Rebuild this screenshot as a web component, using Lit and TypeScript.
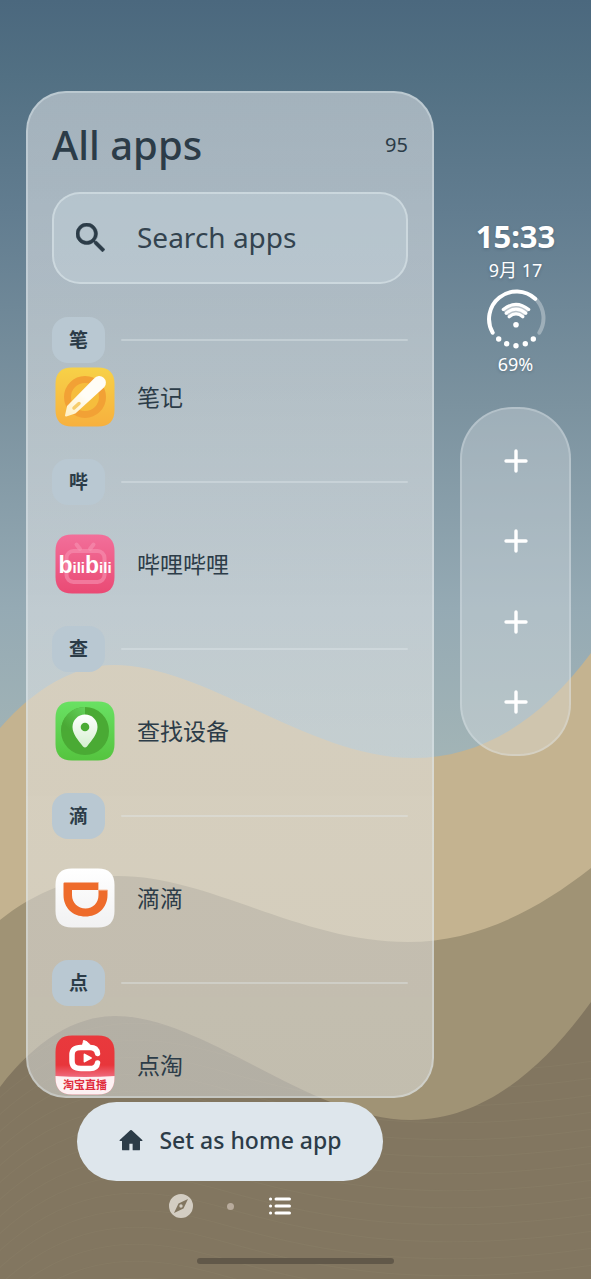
import { LitElement, html, svg, css } from "lit";
import { customElement, property } from "lit/decorators.js";

type AppIcon = "notes" | "bilibili" | "find" | "didi" | "diantao";

interface AppEntry {
  letter: string;
  name: string;
  icon: AppIcon;
}

const APPS: AppEntry[] = [
  { letter: "笔", name: "笔记", icon: "notes" },
  { letter: "哔", name: "哔哩哔哩", icon: "bilibili" },
  { letter: "查", name: "查找设备", icon: "find" },
  { letter: "滴", name: "滴滴", icon: "didi" },
  { letter: "点", name: "点淘", icon: "diantao" },
];

/* Rounded tile shared by every launcher icon, on a 60 x 60 grid. */
const TILE =
  "M17 .5H43C54 .5 59.500 6 59.500 17V43C59.500 54 54 59.500 43 59.500H17C6 59.500 .5 54 .5 43V17C.5 6 6 .5 17 .5Z";

@customElement("dune-wallpaper")
class DuneWallpaper extends LitElement {
  static styles = css`
    :host {
      display: block;
      min-height: 0;
    }
    .scene {
      display: block;
      width: 100%;
      height: 100%;
    }
  `;

  render() {
    const ripples = Array.from({ length: 22 }, (_, i) => i * 17 - 60);
    return html`
      <svg class="scene" viewBox="0 0 591 1279" preserveAspectRatio="none" aria-hidden="true">
        <defs>
          <linearGradient id="sky" x1="0" y1="0" x2="0" y2="760" gradientUnits="userSpaceOnUse">
            <stop offset="0" stop-color="#4b687e" />
            <stop offset="0.1" stop-color="#527083" />
            <stop offset="0.28" stop-color="#627d90" />
            <stop offset="0.53" stop-color="#7b929f" />
            <stop offset="0.8" stop-color="#95aab4" />
            <stop offset="1" stop-color="#a2b4b6" />
          </linearGradient>
          <clipPath id="front">
            <path d="M0 1087C35 1041 75 1016 115 1016C205 1016 310 1120 411 1120C485 1120 545 1066 591 1002V1279H0Z" />
          </clipPath>
        </defs>
        <rect width="591" height="1279" fill="url(#sky)" />
        <path fill="#c4b390" d="M0 728C35 688 75 665 114 665C205 665 310 758 413 758C480 758 540 722 591 653V1279H0Z" />
        <path fill="#a09375" d="M0 920C35 892 75 876 118 876C210 876 300 942 408 942C475 942 535 912 591 868V1279H0Z" />
        <path fill="#827660" d="M0 1087C35 1041 75 1016 115 1016C205 1016 310 1120 411 1120C485 1120 545 1066 591 1002V1279H0Z" />
        <g clip-path="url(#front)" fill="none" stroke="#a89b84" stroke-opacity="0.1" stroke-width="1.200">
          ${ripples.map(
            (y) => svg`<path d=${`M-10 ${1150 + y}C60 ${1080 + y} 130 ${1072 + y} 210 ${1094 + y}S400 ${1150 + y} 600 ${1120 + y}`} />`
          )}
        </g>
      </svg>
    `;
  }
}

@customElement("app-icon")
class AppIconElement extends LitElement {
  @property() icon: AppIcon = "notes";

  static styles = css`
    :host {
      display: block;
      flex: none;
      width: 60px;
      height: 60px;
    }
    .tile {
      display: block;
      width: 60px;
      height: 60px;
    }
    .word {
      font: 700 15px "Liberation Sans", sans-serif;
    }
    .tall {
      font-size: 23px;
    }
    .caption {
      font: 700 11px "Noto Sans CJK SC", sans-serif;
    }
  `;

  private art() {
    switch (this.icon) {
      case "notes":
        return svg`
          <defs>
            <linearGradient id="bg" x1="0" y1="0" x2="0" y2="1">
              <stop offset="0" stop-color="#f7d147" /><stop offset="1" stop-color="#f7b03e" />
            </linearGradient>
            <linearGradient id="pen" x1="1" y1="0" x2="0" y2="1">
              <stop offset="0.5" stop-color="#fffdf6" /><stop offset="1" stop-color="#fff0c4" />
            </linearGradient>
          </defs>
          <path d=${TILE} fill="url(#bg)" />
          <circle cx="30" cy="30" r="17.500" fill="#f6bd3c" stroke="#f2a135" stroke-width="7" />
          <path d="M11 48.500L13 39.500L40 12A5.600 5.600 0 0 1 48.500 19.500L20 45.500Z" fill="url(#pen)" stroke="url(#pen)" stroke-width="2" stroke-linejoin="round" />
          <path d="M19 41L24 36.500" stroke="#f6cd6d" stroke-width="3.500" stroke-linecap="round" />`;
      case "bilibili":
        return svg`
          <defs>
            <linearGradient id="bg" x1="0" y1="0" x2="0" y2="1">
              <stop offset="0" stop-color="#f26f9a" /><stop offset="1" stop-color="#ea4a74" />
            </linearGradient>
          </defs>
          <path d=${TILE} fill="url(#bg)" />
          <g fill="none" stroke="#f793b3" stroke-opacity="0.6" stroke-width="4" stroke-linecap="round">
            <rect x="11.500" y="17" width="38" height="31" rx="7" />
            <path d="M21.500 10.500L25 15M38.500 10.500L35 15" />
          </g>
          <text class="word" x="30" y="39" text-anchor="middle" fill="#fff"><tspan class="tall">b</tspan>ili<tspan class="tall">b</tspan>ili</text>`;
      case "find":
        return svg`
          <defs>
            <linearGradient id="bg" x1="0" y1="0" x2="0" y2="1">
              <stop offset="0" stop-color="#69e163" /><stop offset="1" stop-color="#55c43f" />
            </linearGradient>
            <linearGradient id="pin" x1="0" y1="0" x2="0" y2="1">
              <stop offset="0" stop-color="#fff" /><stop offset="1" stop-color="#d5f0cf" />
            </linearGradient>
            <linearGradient id="sweep" x1="0" y1="1" x2="1" y2="0">
              <stop offset="0.2" stop-color="#4aa935" /><stop offset="1" stop-color="#63d25a" />
            </linearGradient>
          </defs>
          <path d=${TILE} fill="url(#bg)" />
          <circle cx="30" cy="30" r="24" fill="#4aaa34" />
          <path d="M30 30V6A24 24 0 0 0 6 30Z" fill="url(#sweep)" />
          <path d="M30 13.500C37 13.500 42.500 19 42.500 26C42.500 33 37 39 32 45.500Q30 47.500 28 45.500C23 39 17.500 33 17.500 26C17.500 19 23 13.500 30 13.500Z" fill="url(#pin)" />
          <circle cx="30" cy="26" r="4.300" fill="#4aaa34" />`;
      case "didi":
        return svg`
          <defs>
            <linearGradient id="bg" x1="0" y1="0" x2="0" y2="1">
              <stop offset="0" stop-color="#fff" /><stop offset="1" stop-color="#f1f1f2" />
            </linearGradient>
          </defs>
          <path d=${TILE} fill="url(#bg)" />
          <path d="M9.500 14.500H43.500V22H52.500V27C52.500 40 42.500 48.500 30.500 48.500C18 48.500 8.500 40 8.500 27V15.500Q8.500 14.500 9.500 14.500ZM17 22V27C17 35 23 40.500 30.500 40.500C38 40.500 43.500 35 43.500 27V22Z" fill="#ee6b2b" fill-rule="evenodd" />
          <path d="M43.500 14.500V22H52.500" fill="none" stroke="#f8c4a6" stroke-width="1" />`;
      default:
        return svg`
          <defs>
            <linearGradient id="bg" x1="0" y1="0" x2="0" y2="1">
              <stop offset="0" stop-color="#e9393d" /><stop offset="0.5" stop-color="#e8363b" /><stop offset="0.7" stop-color="#ef6a7c" />
            </linearGradient>
            <clipPath id="tile"><path d=${TILE} /></clipPath>
          </defs>
          <path d=${TILE} fill="url(#bg)" />
          <path clip-path="url(#tile)" d="M0 41Q30 43 60 41V60H0Z" fill="#fdf1f3" />
          <path d="M42.500 18.500C42 14 39.500 12.500 35 12.500H26C19.500 12.500 17 15 17 20V26C17 31 19.500 33.500 26 33.500H35C39.500 33.500 42 32 42.500 28" fill="none" stroke="#fff" stroke-width="5.500" stroke-linecap="round" />
          <path d="M25 12C28 11 28 8 28.500 5.500C32 6 35 9 36 12Z" fill="#fff" stroke="#fff" stroke-linejoin="round" />
          <path d="M29.500 19.500L36 23L29.500 26.500Z" fill="#fff" stroke="#fff" stroke-width="1.800" stroke-linejoin="round" />
          <text class="caption" x="30" y="54" text-anchor="middle" fill="#e02b3c">淘宝直播</text>`;
    }
  }

  render() {
    return html`<svg class="tile" viewBox="0 0 60 60" aria-hidden="true">${this.art()}</svg>`;
  }
}

@customElement("app-drawer")
class AppDrawer extends LitElement {
  static styles = css`
    :host {
      box-sizing: border-box;
      display: flex;
      flex-direction: column;
      min-height: 0;
      overflow: hidden;
      padding: 22px 24px 0;
      border: 2px solid rgba(226, 236, 240, 0.4);
      border-radius: 40px;
      background: linear-gradient(rgba(234, 236, 238, 0.53), rgba(228, 230, 230, 0.51)) border-box;
    }
    .head {
      display: flex;
      align-items: center;
      justify-content: space-between;
      height: 60px;
    }
    .title {
      margin: 0;
      font-size: 40px;
      font-weight: 500;
      line-height: 56px;
    }
    .count {
      font-size: 20px;
      line-height: 28px;
    }
    .search {
      box-sizing: border-box;
      display: flex;
      flex: none;
      align-items: center;
      gap: 32px;
      height: 92px;
      margin-top: 17px;
      padding: 0 22px 2px;
      border: 2px solid rgba(226, 236, 240, 0.5);
      border-radius: 28px;
      background: rgba(200, 214, 222, 0.4);
    }
    .glass {
      flex: none;
      width: 29px;
      height: 29px;
    }
    .field {
      flex: 1;
      min-width: 0;
      padding: 0;
      border: 0;
      outline: 0;
      background: none;
      color: inherit;
      font: inherit;
      font-size: 28px;
      line-height: 40px;
    }
    .field::placeholder {
      color: #33434f;
      opacity: 1;
    }
    .list {
      flex: 1;
      min-height: 0;
      margin: 33px 0 0;
      padding: 0;
      overflow: hidden;
      list-style: none;
    }
    .divider {
      display: flex;
      align-items: center;
      gap: 16px;
      height: 46px;
    }
    .divider::after {
      content: "";
      flex: 1;
      height: 2px;
      border-radius: 1px;
      background: rgba(226, 234, 236, 0.38);
    }
    .letter {
      width: 53px;
      margin: 0;
      border-radius: 16px;
      background: #b9c8d2;
      font-size: 19px;
      font-weight: 700;
      line-height: 46px;
      text-align: center;
    }
    .app {
      box-sizing: border-box;
      display: flex;
      align-items: center;
      gap: 22px;
      width: 100%;
      height: 121px;
      padding: 0 3px 4px;
      border: 0;
      background: none;
      color: inherit;
      font: inherit;
      font-size: 23px;
      line-height: 36px;
      text-align: left;
    }
    /* The first group is partly scrolled under its pinned letter. */
    .group:first-child .app {
      margin-top: -25px;
    }
  `;

  render() {
    return html`
      <header class="head">
        <h1 class="title">All apps</h1>
        <span class="count">95</span>
      </header>
      <label class="search">
        <svg class="glass" viewBox="3 3 17.500 17.500" fill="#2c3c48" stroke="#2c3c48" stroke-width="0.300" aria-hidden="true">
          <path d="M15.500 14h-.79l-.28-.27A6.470 6.470 0 0 0 16 9.500 6.500 6.500 0 1 0 9.500 16c1.610 0 3.090-.59 4.230-1.570l.27.28v.79l5 4.990L20.490 19l-4.990-5zm-6 0C7.010 14 5 11.990 5 9.500S7.010 5 9.500 5 14 7.010 14 9.500 11.990 14 9.500 14z" />
        </svg>
        <input class="field" type="search" placeholder="Search apps" aria-label="Search apps" />
      </label>
      <ul class="list">
        ${APPS.map(
          (a) => html`
            <li class="group">
              <div class="divider"><h2 class="letter">${a.letter}</h2></div>
              <button class="app" type="button">
                <app-icon .icon=${a.icon}></app-icon>
                <span>${a.name}</span>
              </button>
            </li>
          `
        )}
      </ul>
    `;
  }
}

@customElement("status-rail")
class StatusRail extends LitElement {
  static styles = css`
    :host {
      display: flex;
      flex-direction: column;
      align-items: center;
      color: #fff;
    }
    .time {
      font-size: 31px;
      font-weight: 700;
      line-height: 40px;
      text-shadow: 0 1px 3px rgba(40, 60, 75, 0.35);
    }
    .note {
      font-size: 18px;
      line-height: 28px;
      text-shadow: 0 1px 3px rgba(40, 60, 75, 0.35);
    }
    .ring {
      width: 60px;
      height: 60px;
      margin: 5px 0 1px;
    }
    .dock {
      box-sizing: border-box;
      display: grid;
      grid-auto-rows: 1fr;
      align-self: stretch;
      height: 349px;
      margin-top: 29px;
      padding: 12px 0;
      border: 2px solid rgba(226, 236, 240, 0.3);
      border-radius: 52px;
      background: rgba(232, 234, 238, 0.33) border-box;
    }
    .slot {
      display: grid;
      place-items: center;
      padding: 0;
      border: 0;
      background: none;
    }
    .plus {
      width: 24px;
      height: 24px;
    }
  `;

  render() {
    return html`
      <time class="time">15:33</time>
      <span class="note">9月 17</span>
      <svg class="ring" viewBox="0 0 60 60" fill="none" stroke-linecap="round" aria-hidden="true">
        <path d="M50.700 11A27.500 27.500 0 0 1 53.300 43.700" stroke="#fff" stroke-opacity="0.32" stroke-width="4" />
        <path d="M6.700 43.700A27.500 27.500 0 0 1 49.200 9.800" stroke="#fff" stroke-width="4" />
        <g fill="#fff">
          <circle cx="12.700" cy="50" r="2.700" />
          <circle cx="20.700" cy="54.700" r="2.700" />
          <circle cx="30" cy="56.700" r="2.700" />
          <circle cx="39.300" cy="54.700" r="2.700" />
          <circle cx="47.300" cy="50" r="2.700" />
          <circle cx="30" cy="35.700" r="2.800" />
        </g>
        <path d="M17 21Q30 11 43 21L37 28Q30 22 23 28Z" fill="#b9c3ca" />
        <g stroke="#fff" stroke-width="3.200">
          <path d="M17.300 20.600Q30 10.200 42.700 20.600" />
          <path d="M20.200 24.200Q30 16.200 39.800 24.200" />
          <path d="M23.200 27.800Q30 22 36.800 27.800" />
        </g>
      </svg>
      <span class="note">69%</span>
      <div class="dock">
        ${[1, 2, 3, 4].map(
          (n) => html`
            <button class="slot" type="button" aria-label=${`Add shortcut ${n}`}>
              <svg class="plus" viewBox="0 0 24 24" stroke="#fff" stroke-width="3.400" stroke-linecap="round" aria-hidden="true">
                <path d="M12 2V22M2 12H22" />
              </svg>
            </button>
          `
        )}
      </div>
    `;
  }
}

@customElement("app-root")
class AppRoot extends LitElement {
  static styles = css`
    :host {
      display: grid;
      grid-template: minmax(0, 1fr) / minmax(0, 1fr);
      height: 100vh;
      overflow: hidden;
      color: #2c3c48;
      font-family: "Noto Sans", "Noto Sans CJK SC", sans-serif;
    }
    .wallpaper,
    .home {
      grid-area: 1 / 1;
    }
    .home {
      z-index: 1;
      display: flex;
      flex-direction: column;
      min-height: 0;
      padding-top: 91px;
    }
    .columns {
      display: grid;
      flex: 1;
      grid-template-columns: minmax(0, 1fr) 111px;
      grid-template-rows: minmax(0, 1fr) auto;
      column-gap: 26px;
      min-height: 0;
      padding: 0 20px 0 26px;
    }
    .rail {
      padding-top: 125px;
    }
    .actions {
      display: flex;
      flex-direction: column;
      align-items: center;
      padding-top: 4px;
    }
    .set-home {
      box-sizing: border-box;
      display: flex;
      align-items: center;
      gap: 15px;
      height: 79px;
      padding: 0 41px 3px;
      border: 0;
      border-radius: 40px;
      background: #dee6ec;
      color: inherit;
      font: inherit;
      font-size: 23px;
      font-weight: 500;
      line-height: 32px;
      white-space: nowrap;
    }
    .house {
      width: 26px;
      height: 26px;
    }
    .pages {
      display: flex;
      align-items: center;
      justify-content: center;
      gap: 22px;
      height: 50px;
    }
    .page {
      display: block;
      padding: 0;
      border: 0;
      background: none;
    }
    .mark {
      display: block;
      width: 24px;
      height: 24px;
    }
    .dot {
      width: 7px;
      height: 7px;
      margin: 0 12px;
      border-radius: 50%;
      background: #b8ab9c;
    }
    .gesture {
      align-self: center;
      width: 33.333%;
      height: 6px;
      margin: 27px 0 15px;
      border-radius: 3px;
      background: #615849;
    }
  `;

  render() {
    return html`
      <dune-wallpaper class="wallpaper"></dune-wallpaper>
      <main class="home">
        <div class="columns">
          <app-drawer></app-drawer>
          <status-rail class="rail"></status-rail>
          <div class="actions">
            <button class="set-home" type="button">
              <svg class="house" viewBox="0 0 24 24" fill="#2c3c48" aria-hidden="true">
                <path d="M10.500 21V15.500H13.500V21Q13.500 21.500 14 21.500H19.500Q20.300 21.500 20.300 20.700V13H22Q23.200 12.700 22.400 12L12.700 3Q12 2.400 11.300 3L1.600 12Q.8 12.700 2 13H3.700V20.700Q3.700 21.500 4.500 21.500H10Q10.500 21.500 10.500 21Z" />
              </svg>
              Set as home app
            </button>
            <nav class="pages">
              <button class="page" type="button" aria-label="Explore">
                <svg class="mark" viewBox="0 0 24 24" fill="#d3cdc2" aria-hidden="true">
                  <path fill-rule="evenodd" d="M12 0A12 12 0 1 0 12 24A12 12 0 1 0 12 0ZM19 5L14.500 14.500L5 19L9.500 9.500ZM12 10.300A1.700 1.700 0 1 0 12 13.700A1.700 1.700 0 1 0 12 10.300Z" />
                </svg>
              </button>
              <button class="page dot" type="button" aria-label="Home"></button>
              <button class="page" type="button" aria-label="All apps">
                <svg class="mark" viewBox="0 0 24 24" stroke="#fff" stroke-width="3" stroke-linecap="round" aria-hidden="true">
                  <path d="M8 5H21.500M8 12H21.500M8 19H21.500M2.500 5H2.600M2.500 12H2.600M2.500 19H2.600" />
                </svg>
              </button>
            </nav>
          </div>
        </div>
        <div class="gesture"></div>
      </main>
    `;
  }
}
